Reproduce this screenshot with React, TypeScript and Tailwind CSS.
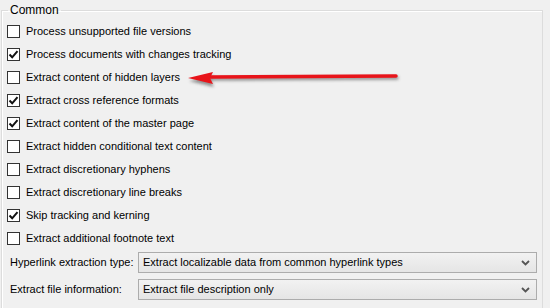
import React from "react";

const options = [
  { label: "Process unsupported file versions", checked: false },
  { label: "Process documents with changes tracking", checked: true },
  { label: "Extract content of hidden layers", checked: false },
  { label: "Extract cross reference formats", checked: true },
  { label: "Extract content of the master page", checked: true },
  { label: "Extract hidden conditional text content", checked: false },
  { label: "Extract discretionary hyphens", checked: false },
  { label: "Extract discretionary line breaks", checked: false },
  { label: "Skip tracking and kerning", checked: true },
  { label: "Extract additional footnote text", checked: false },
];

const Checkbox = ({ checked }: { checked: boolean }) => (
  <span className="w-[13px] h-[13px] border border-[#333333] bg-white flex items-center justify-center shrink-0">
    {checked && (
      <svg width="11" height="11" viewBox="0 0 11 11">
        <path d="M1.5 5.5 L4.2 8.3 L9.5 2.2" fill="none" stroke="#111" strokeWidth="2" />
      </svg>
    )}
  </span>
);

const Combo = ({ value }: { value: string }) => (
  <div className="flex-1 h-[21px] border border-[#acacac] bg-gradient-to-b from-[#f2f2f2] to-[#e5e5e5] flex items-center pl-[4px] pr-[6px]">
    <span className="flex-1 truncate">{value}</span>
    <svg width="9" height="6" viewBox="0 0 9 6">
      <path d="M1 1 L4.5 4.5 L8 1" fill="none" stroke="#555" strokeWidth="1.8" />
    </svg>
  </div>
);

const App = () => {
  return (
    <div
      className="relative w-[550px] h-[308px] overflow-hidden bg-[#f0f0f0] text-[11px] text-black"
      style={{ fontFamily: '"Liberation Sans", Arial, sans-serif' }}
    >
      <fieldset className="mt-[3px] ml-[1px] w-[542px] h-[320px] border border-[#dcdcdc] shadow-[inset_1px_1px_0_#ffffff] pl-[5px] pr-[5px] pt-[2px]">
        <legend className="ml-[1px] px-[2px] leading-[14px] text-[12px]">Common</legend>

        {/* Checkbox rows */}
        <div className="flex flex-col">
          {options.map((opt) => (
            <label key={opt.label} className="h-[23px] flex items-center gap-[6px] pt-[1px]">
              <Checkbox checked={opt.checked} />
              <span>{opt.label}</span>
            </label>
          ))}
        </div>

        {/* Dropdowns */}
        <div className="flex flex-col gap-[6px] mt-[3px] pl-[3px]">
          <div className="flex items-center">
            <span className="w-[128px] shrink-0 whitespace-nowrap">Hyperlink extraction type:</span>
            <Combo value="Extract localizable data from common hyperlink types" />
          </div>
          <div className="flex items-center">
            <span className="w-[128px] shrink-0 whitespace-nowrap">Extract file information:</span>
            <Combo value="Extract file description only" />
          </div>
        </div>
      </fieldset>

      {/* Red annotation arrow */}
      <svg className="absolute left-[180px] top-[64px]" width="228" height="28" viewBox="0 0 228 28">
        <defs>
          <filter id="sh" x="-10%" y="-50%" width="120%" height="200%">
            <feGaussianBlur stdDeviation="1.5" />
          </filter>
        </defs>
        <g transform="translate(1 3)" opacity="0.5" filter="url(#sh)">
          <path d="M30 12 L216 11" stroke="#333" strokeWidth="3.5" strokeLinecap="round" />
          <path d="M8 14 L33 8 L30 14 L33 20 Z" fill="#333" />
        </g>
        <path d="M30 13 L216 12" stroke="#e8141a" strokeWidth="3.5" strokeLinecap="round" />
        <path d="M8 14 L33 8 L30 14 L33 20 Z" fill="#e8141a" />
      </svg>
    </div>
  );
};

export default App;
